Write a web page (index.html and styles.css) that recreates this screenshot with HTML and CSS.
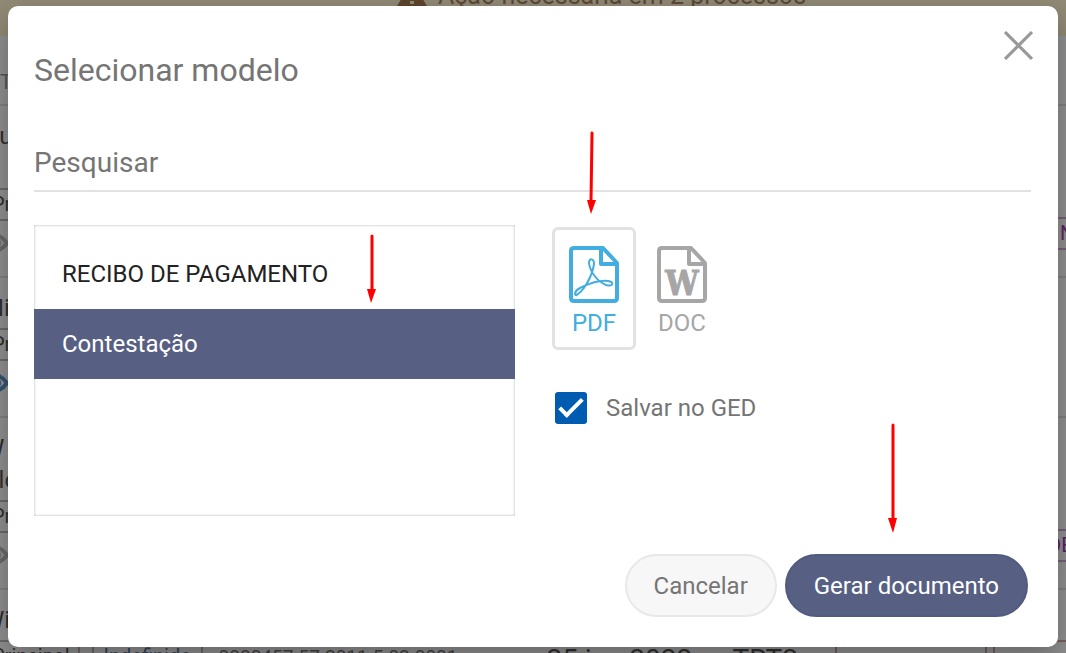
FILE: index.html
```html
<!DOCTYPE html>
<html lang="pt-BR">
<head>
    <meta charset="UTF-8">
    <meta name="viewport" content="width=device-width, initial-scale=1.0">
    <title>Selecionar modelo</title>
    <link rel="stylesheet" href="styles.css">
</head>
<body>

<!-- Página de processos, atrás do modal -->
<div class="page">
    <div class="banner">
        <svg class="warning" viewBox="0 0 32 28"><path d="M16 0L32 28H0Z" fill="#a5784e"/><path d="M16 10v8M16 21v3" stroke="#fff3cf" stroke-width="4"/></svg>
        <span>Ação necessária em 2 processos</span>
    </div>
    <div class="head">TIPO</div>

    <div class="row">
        <div class="cell">
            <div class="title">Gu<br>&nbsp;</div>
            <div class="tags"><span class="tag">Principal</span></div>
            <svg class="eye" viewBox="0 0 30 20"><path d="M2 10Q15 -6 27 10Q15 26 2 10Z"/><circle cx="15" cy="10" r="4"/></svg>
        </div>
        <div class="side"><span class="tag purple">NOVO</span></div>
    </div>
    <div class="row">
        <div class="cell">
            <div class="title">Mia</div>
            <div class="tags"><span class="tag">Principal</span></div>
            <svg class="eye blue" viewBox="0 0 30 20"><path d="M2 10Q15 -6 27 10Q15 26 2 10Z"/><circle cx="15" cy="10" r="4"/></svg>
        </div>
    </div>
    <div class="row">
        <div class="cell">
            <div class="title">W<br>Clo</div>
            <div class="tags"><span class="tag">Principal</span></div>
            <svg class="eye" viewBox="0 0 30 20"><path d="M2 10Q15 -6 27 10Q15 26 2 10Z"/><circle cx="15" cy="10" r="4"/></svg>
        </div>
        <div class="side"><span class="tag purple wide">DEFESA</span></div>
    </div>
    <div class="row">
        <div class="cell">
            <div class="title">Wi</div>
            <div class="tags">
                <span class="tag">Principal</span>
                <span class="tag link">Indefinido</span>
                <span class="number">0000457-57.2011.5.02.0001</span>
                <span class="date">25 jan 2022</span>
                <span class="court">TRT2</span>
                <span class="tag red"></span>
                <span class="tag red"></span>
            </div>
        </div>
    </div>
</div>

<!-- Modal -->
<div class="overlay">
    <div class="modal" role="dialog" aria-labelledby="modal-title">
        <div class="modal-header">
            <h1 id="modal-title">Selecionar modelo</h1>
            <button class="close" aria-label="Fechar">
                <svg viewBox="0 0 28 28"><path d="M1 1L27 27M27 1L1 27"/></svg>
            </button>
        </div>

        <input class="search" type="text" placeholder="Pesquisar" aria-label="Pesquisar">

        <div class="content">
            <div class="models">
                <button class="model">RECIBO DE PAGAMENTO</button>
                <button class="model selected">Contestação</button>
                <svg class="arrow arrow-model" viewBox="0 0 10 69"><path d="M5 2V56" /><path class="tip" d="M0 55H9L4 69Z"/></svg>
            </div>

            <div class="options">
                <div class="formats">
                    <label class="format selected">
                        <input type="radio" name="format" checked>
                        <svg class="file" viewBox="0 0 50 57">
                            <path class="sheet" d="M4 2H34L48 17V52Q48 55 45 55H5Q2 55 2 52V5Q2 2 5 2M32 2V18H48"/>
                            <path class="acrobat" d="M7 49C13 47 23 32 25 18C25 12 20 12 20 17C21 26 29 36 37 39C44 41 46 36 39 35C31 34 19 38 11 42C5 45 5 50 8 49"/>
                        </svg>
                        <span>PDF</span>
                    </label>
                    <label class="format">
                        <input type="radio" name="format">
                        <svg class="file" viewBox="0 0 50 57">
                            <path class="sheet" d="M4 2H34L48 17V52Q48 55 45 55H5Q2 55 2 52V5Q2 2 5 2M32 2V18H48"/>
                            <text class="word" x="25" y="49">W</text>
                        </svg>
                        <span>DOC</span>
                    </label>
                    <svg class="arrow arrow-format" viewBox="0 0 10 83"><path d="M5 2L4 70"/><path class="tip" d="M0 69H9L4 83Z"/></svg>
                </div>
                <label class="save">
                    <input type="checkbox" checked>
                    <span>Salvar no GED</span>
                </label>
            </div>
        </div>

        <div class="actions">
            <button class="button">Cancelar</button>
            <button class="button primary">Gerar documento</button>
            <svg class="arrow arrow-submit" viewBox="0 0 10 110"><path d="M5 2V96"/><path class="tip" d="M0 95H9L5 110Z"/></svg>
        </div>
    </div>
</div>

</body>
</html>
```

FILE: styles.css
```css
* {
    box-sizing: border-box;
}
body {
    margin: 0;
    height: 100vh;
    overflow: hidden;
    font-family: Roboto, "Liberation Sans", sans-serif;
    background-color: #fff;
}
button, input {
    font-family: inherit;
}
button {
    cursor: pointer;
}

/* Página ao fundo */
.page {
    height: 100vh;
    overflow: hidden;
    color: #555;
}
.banner {
    display: flex;
    justify-content: center;
    gap: 10px;
    height: 36px;
    padding-left: 136px;
    background-color: #fff3cf;
    color: #a5825e;
    font-size: 25px;
    line-height: 28px;
}
.banner span, .banner svg {
    margin-top: -18px;
}
.banner svg {
    margin-top: -20px;
}
.warning {
    width: 32px;
    height: 28px;
}
.head {
    height: 70px;
    padding-top: 34px;
    border-bottom: 2px solid #e4e4e4;
    color: #999;
    font-size: 20px;
    line-height: 24px;
}
.row {
    display: flex;
    justify-content: space-between;
    margin-left: -30px;
    padding: 14px 0 23px 10px;
    border-bottom: 2px solid #e4e4e4;
}
.title {
    padding-left: 3px;
    font-size: 24px;
    line-height: 32px;
}
.tags {
    display: flex;
    gap: 12px;
    margin: 4px 0 12px;
    white-space: nowrap;
}
.tag {
    padding: 0 8px 0 10px;
    border: 2px solid #bbb;
    font-size: 20px;
    line-height: 29px;
}
.tag.link {
    width: 111px;
    color: #5a7ba5;
}
.number {
    width: 320px;
    padding-left: 4px;
    color: #777;
    font-size: 19px;
    line-height: 33px;
}
.date, .court {
    width: 174px;
    font-size: 28px;
    line-height: 40px;
}
.court {
    width: 90px;
}
.tag.red {
    width: 152px;
    margin-right: -6px;
    border-color: #d9a5a5;
}
.eye {
    display: block;
    width: 30px;
    height: 20px;
    fill: none;
    stroke: #bbb;
    stroke-width: 4;
}
.eye.blue {
    stroke: #5a95d0;
}
.side {
    align-self: flex-end;
    width: 10px;
    margin-bottom: 3px;
    white-space: nowrap;
}
.purple {
    display: block;
    width: 80px;
    padding: 0 2px;
    border-color: #d5a5dc;
    color: #a63cb5;
}
.purple.wide {
    margin-left: -12px;
}

/* Modal */
.overlay {
    position: absolute;
    inset: 0;
    padding: 6px 8px;
    background-color: rgba(0, 0, 0, 0.43);
}
.modal {
    padding: 25px 27px 30px 26px;
    border-radius: 10px;
    background-color: #fff;
    box-shadow: 0 12px 32px rgba(0, 0, 0, 0.3);
    color: #757575;
}
.modal-header {
    display: flex;
    justify-content: space-between;
    align-items: flex-start;
}
.modal-header h1 {
    margin: 19px 0 0;
    font-size: 32px;
    font-weight: 400;
    line-height: 40px;
}
.close {
    margin-right: -2px;
    padding: 0;
    border: none;
    background: none;
}
.close svg {
    display: block;
    width: 29px;
    height: 29px;
    fill: none;
    stroke: #999;
    stroke-width: 3;
}
.search {
    display: block;
    width: 100%;
    height: 58px;
    margin-top: 44px;
    padding: 0;
    border: none;
    border-bottom: 2px solid #e2e2e2;
    outline: none;
    color: #757575;
    font-size: 28px;
}
.search::placeholder {
    color: #757575;
}
.content {
    display: grid;
    grid-template-columns: 481fr 479fr;
    gap: 37px;
    margin-top: 33px;
}
.models {
    position: relative;
    min-height: 291px;
    padding-top: 14px;
    box-shadow: inset 0 0 3px rgba(0, 0, 0, 0.3);
}
.model {
    display: block;
    width: 100%;
    padding: 0 28px;
    border: none;
    background: none;
    color: #222;
    font-size: 24px;
    line-height: 70px;
    text-align: left;
}
.model.selected {
    background-color: #576083;
    color: #fff;
}
.options {
    padding-top: 2px;
}
.formats {
    position: relative;
    display: flex;
    gap: 4px;
}
.format {
    display: flex;
    flex-direction: column;
    align-items: center;
    gap: 6px;
    width: 84px;
    height: 123px;
    padding-top: 16px;
    border: 3px solid transparent;
    border-radius: 6px;
    color: #a6a6a6;
    font-size: 24px;
    line-height: 28px;
    cursor: pointer;
}
.format.selected {
    border-color: #e2e2e2;
    color: #41ade0;
}
.format input {
    position: absolute;
    opacity: 0;
}
.file {
    width: 50px;
    height: 57px;
    fill: none;
    stroke: currentColor;
    flex-shrink: 0;
}
.sheet {
    stroke-width: 4;
    stroke-linejoin: round;
}
.acrobat {
    stroke-width: 2;
}
.word {
    fill: currentColor;
    stroke-width: 1;
    font-family: "DejaVu Serif Condensed", "DejaVu Serif", serif;
    font-size: 33px;
    font-weight: 700;
    text-anchor: middle;
}
.save {
    display: flex;
    align-items: center;
    gap: 19px;
    margin: 42px 0 0 3px;
    font-size: 24px;
    line-height: 32px;
}
.save input {
    appearance: none;
    width: 32px;
    height: 32px;
    margin: 0;
    border-radius: 3px;
    background-color: #005cb0;
}
.save input:checked::before {
    content: "";
    display: block;
    box-sizing: border-box;
    width: 24px;
    height: 12px;
    margin: 7px 4px;
    border: solid #fff;
    border-width: 0 0 4px 4px;
    transform: rotate(-45deg);
}
.actions {
    position: relative;
    display: flex;
    justify-content: flex-end;
    gap: 8px;
    margin-top: 38px;
    padding-right: 3px;
}
.button {
    height: 63px;
    padding: 0 27px;
    border: 2px solid #e8e8e8;
    border-radius: 32px;
    background-color: #f7f7f7;
    color: #757575;
    font-size: 24px;
}
.button.primary {
    border-color: #515b7f;
    background-color: #576083;
    color: #fff;
}

/* Setas de orientação */
.arrow {
    position: absolute;
    width: 10px;
    fill: none;
    stroke: #f00;
    stroke-width: 3;
    stroke-linecap: round;
    pointer-events: none;
}
.arrow .tip {
    fill: #f00;
    stroke: none;
}
.arrow-model {
    top: 9px;
    left: 333px;
    height: 69px;
}
.arrow-format {
    top: -96px;
    left: 35px;
    height: 83px;
}
.arrow-submit {
    top: -131px;
    right: 133px;
    height: 110px;
}
```
